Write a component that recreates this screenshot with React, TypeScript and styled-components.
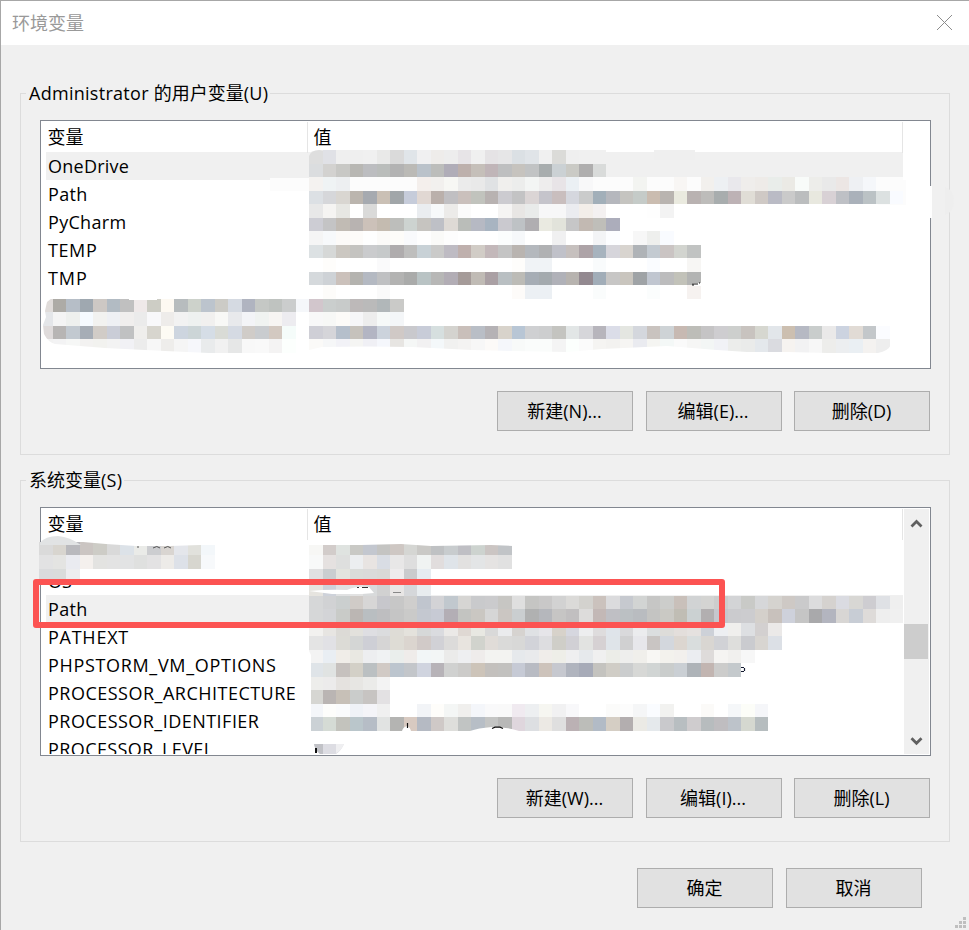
import React from "react";
import styled, { createGlobalStyle } from "styled-components";

const GlobalStyle = createGlobalStyle`
  * { box-sizing: border-box; }
  body { margin: 0; background: #f0f0f0; overflow: hidden; }
`;

const Dialog = styled.main`
  position: relative;
  width: 969px;
  height: 930px;
  overflow: hidden;
  display: flex;
  flex-direction: column;
  background: #f0f0f0;
  border-top: 1px solid #a7a7a7;
  border-left: 1px solid #a7a7a7;
  color: #000;
  font-family: "Open Sans", "Noto Sans CJK SC", sans-serif;
  font-size: 18px;
  line-height: 28px;
`;

const TitleBar = styled.header`
  flex: none;
  height: 44px;
  display: flex;
  justify-content: space-between;
  align-items: center;
  padding: 0 16px 1px 11px;
  background: #fff;
  color: #999;
`;

const CloseIcon = styled.svg`
  width: 17px;
  height: 17px;
  stroke: #8c8c8c;
  stroke-width: 1;
  fill: none;
`;

const Group = styled.fieldset<{ $first?: boolean }>`
  flex: none;
  margin: ${(p) => (p.$first ? "34px" : "11px")} 19px 0;
  padding: 0 18px 23px 19px;
  height: 376px;
  border: 1px solid #dcdcdc;
  min-width: 0;
`;

const Legend = styled.legend`
  margin-left: -14px;
  padding: 0 2px 0 3px;
  height: 28px;
  white-space: nowrap;
`;

const List = styled.div`
  display: flex;
  margin-top: 13px;
  height: 249px;
  width: 891px;
  padding: 1px;
  border: 1px solid #828790;
  background: #fff;
  overflow: hidden;
`;

const Table = styled.div`
  width: 861px;
  height: 245px;
  overflow: hidden;
`;

const HeaderRow = styled.div`
  display: grid;
  grid-template-columns: 266px 595px;
  height: 30px;
  line-height: 31px;
`;

const HeaderCell = styled.div`
  padding-left: 5.5px;
  border-right: 1px solid #e5e5e5;
`;

const Row = styled.div<{ $selected?: boolean }>`
  height: 28px;
  margin-left: 4px;
  padding-left: 2px;
  white-space: nowrap;
  background: ${(p) => (p.$selected ? "#f0f0f0" : "transparent")};
`;

const Label = styled.span<{ $track?: number }>`
  letter-spacing: ${(p) => p.$track ?? 0}px;
`;

const Scrollbar = styled.div`
  width: 25px;
  margin-left: 1px;
  display: flex;
  flex-direction: column;
  align-items: center;
  background: #f0f0f0;
`;

const Arrow = styled.svg`
  width: 25px;
  height: 30px;
  fill: none;
  stroke: #606060;
  stroke-width: 2.8;
`;

const Thumb = styled.div`
  width: 24px;
  height: 35px;
  margin: 85px 1px 65px 0;
  background: #cdcdcd;
`;

const Actions = styled.div`
  display: flex;
  justify-content: flex-end;
  gap: 12.5px;
  margin: 22px 1px 0 0;
`;

const Footer = styled(Actions)`
  margin: 26px 47px 0 0;
  gap: 13px;
`;

const Button = styled.button`
  width: 136px;
  height: 40px;
  padding: 0 1px 1px 0;
  border: 1px solid #adadad;
  border-radius: 0;
  background: #e1e1e1;
  color: #000;
  font: inherit;
`;

const Redaction = styled.svg`
  position: absolute;
  left: -1px;
  top: -1px;
  width: 969px;
  height: 930px;
  pointer-events: none;
`;

const Highlight = styled.div`
  position: absolute;
  left: 32px;
  top: 578px;
  width: 692px;
  height: 49px;
  border: 6px solid #fc5352;
  border-radius: 3px;
`;

/* Each strip is one mosaic row: grid row, first column, cell colours. */
type Strip = [number, number, string];
const CELL = 13.5;
const strips: Strip[] = [
  [-1, 1, "e0e1e6 efefef efefef f0f0f0 e9e9e8 dadada e0e5e9 f0f0f1 eeecea ededed e7e4e7 f0f0f0 e5e3e5 e6e6e7 dbe0e4 e0e4e8 f0f0f0 dbdbd8 efefef f0f0f0 f0f0f0"],
  [0, 0, "dbdddf d3d2d0 c8c8c5 b8b7b3 bcbdc0 babdbb b3b3b3 bbbab6 bac2ca bcbdbb b0adb8 bdb0ac c5bfb9 c0b5b8 bebfc0 c6c3be c1c3c4 a8adae cbd1d4 cacac5 afaeae d9dbda"],
  [1, 0, "f4f2f0 eff3f4 edeff1 fcfcfc fcfcfc fcfcfc fcfcfc fcfcfc f4efec f2f0ee f7f7f4 ebebeb e9e9e9 e0e2e4 f0efed ecedec f3f5f4 eeeded e8e4e7 ebf0f4 f8f8f9 fcfcfc fcfcfc fcfcfc f3f4f1 fcfcfc fcfcfc f8f6f4 fcfcfc f2f0ed edf0f3 e9e8ec efedeb eeebe8 e9edea ebeae5 f8fbf9 ededea e9e9e9 ece6e4 eef0f3 f5f7fa fcfcfc fcfcfc"],
  [2, 0, "dce0e4 d6d7da d9d6d1 bbb5ae a6aab0 cac0b5 a1a6a9 c6ccda e1d8d3 bab0ab c0bfc2 cac0bc c1c3bd b8b2b1 cccbd0 c3c3c4 dbd5d5 c5c4cb c9bebe d5d7de cacbcb a2afb9 b5b7bd c5c4c0 c5cbc8 cabcb0 b9b4b0 eaeadf b9b2b1 bdbcba a8adae bdb2b5 e0ddd6 cfc9c5 babbc5 cacaca bbbdbe e8e8df d8d1d5 bec0c5 aab1ba bbc2c5 dce1e1 f9fbff"],
  [3, 0, "e8e8e8 f5f4f2 e7e7e3 - dadad9 - - - eaedf0 f7f9fa ecebe9 fbfbfb - - f5f4f3 e8e6e4 e9ebea f7f7f8 f7f7f8 ebecf0 f3eee9 f4f1f1 - - - fefefe f3f3f3"],
  [4, 0, "cdcdd4 c4c4c5 c1bbb4 b8b3b1 ccc1b9 c4bbb0 bdbebb cdd3d0 c6c4c0 bec0c6 dedad5 babdb9 b6b9c3 a8b4c1 cac9cf bec2c5 b0aeb1 eaeae1 e2e3db c6c6c7 c2b9b2 bfbeb9 acadbb"],
  [5, 0, "f5f5f5 f7f9fb fcfaf8 fdfbf9 fefefe fbfaf8 fdfcf9 f9fafc fefefe fafaf8 fdfdfd - - - fbfdfd f6f8fa - - f0f0f1 - - f3f4f6 fcfdff - f7f7f7 eeefed f9fbff"],
  [6, 0, "dce1e3 d6d8d7 cbc7c1 c4c3c0 cacbcd c6c9ca afacad bebebd c8d1d6 cacac9 bebbc3 bfb0ad d1ccc6 c3b8ba c4c4c4 b9b4b0 b4b8bd b0b1b3 c0c1c9 c6c0be ada3a7 a7b3be d6d5db d8d4cf afb3b7 c3cad1 cac4c3 d2d4cf c1c3c2"],
  [7, 1, "fefdfb - - - fafafb - - - - - - - - - fefdfb f0f3f6 f0f3f6 - - - f9fbfc - - - fafcff - - f7f6f4"],
  [8, 0, "d5d9dc ced2d6 cbc1bb b4b3af b4b9c2 bfc0c2 b3b3b2 aaabaa b9c3c4 b7b7b6 b2adb5 a59b99 c0bbb5 aaa0a4 b9bfc2 bcbbb6 a6adb5 a4aaae b0b1b8 b7b3af 938990 a1adb8 c7c6c5 c9c5be 9fa3a6 c0c6d0 bcbcbd c2c2b9 b3b4b3"],
  [9, 1, "fdfcfa - - - fafafa - - - - - - - - - fdfbf9 ecf0f4 ecf0f4 - - - fafcfc - - - fbfdfd - - f6f2f0"],
  [10, -20, "e0dcda adaba6 b6bec7 9fa8b0 cdc8c4 b2bbc3 c0c0c0 efe9e9 cdcdc5 fdf9f2 b7bcbe cdd2cb bcc4cd cccbc6 d5dae2 b0b4c0 c5c8c5 bfc3c0 cbcdcd f5f7fa d2c6cc cacecd c8cbca bdb9b9 bababa b1b7b9 cacac8"],
  [11, -20, "e4e6e9 f4f4f4 eef0ee f5faff f2f2f0 eef0f4 f0eeed ebebeb f8f8fa eeecea f2f2f2 eef1f0 f1f0ef f8f8f6 e8e9ec f3f4f7 f0f3f1 f7f5f3 edecf0 - f8f8f8 f7f8f6 fcfbf8 f6f6f8 ededed f6f9f8 f4f6f8"],
  [12, -20, "dfdbdb b7b5b4 c2c9d0 a6adb6 d1ccc7 cacdd7 c0c1c2 efeeec d7d5ce fdfbf4 cdd5df ccd5d7 d5dde6 d9dbd6 d5dae3 d0ccc8 c9cccf d3c9c1 f5fcfa - cfcfd6 d5d5d9 b5bfcb c6c2bc b3b5c3 ccd3dc d0c9c6 c9c9cd c8ccd8 d6dfdf d4d3cf c9bfba b9bec6 b5b2b5 d8d3cb b8c6d5 cfd0d2 cdcecf c4c4c0 e2e6e6 d6d6da b7b5bc dbdde8 e4e6e1 d4d7dd c9c3bf ced3d6 c7b9b2 bdbdb8 c5c4c5 cecdd0 cdcfcd c8c3bf d6d7d0 e2e6ea ccbfb0 b6b9c3 c9cdcc eae9e9 ccd3e0 e1dbd5 c3c7ca fbfcff"],
  [13, -20, "f2f2f2 f3f3f4 f6f7f6 f3f2f1 f2f2ef f3f3f3 f1f1f5 ececec f7f7f7 eeedeb f5f5f5 f6f7fb e9ebec f1f1f1 e6e7e7 f8f8f8 f9f9f9 f4f3f3 fcfffd - fbfaf8 f6f7f8 f2f2f7 f5f5f3 f0f0f5 f5f7fc e7e5e2 f5f7f6 f2f1f2 f4f8fa f1f1f0 f4f3f2 f7f7f7 fcfaf8 f5f7fb f8faf9 fafcfb fafcfb f4f4f4 fcfffd fbfbfb f5f4f2 f3f2f0 f6f5f3 eaebf0 f5f5f2 f4f8f7 fafafa f6f6f5 f3f6f5 f1f2f6 ecedeb eaebea e4e8ec dadbe0 f6f3f0 f2f2f3 f7f7f7 ededeb eceef0 eaeff3 f4f2f0 eeeeee"],

  [28, -20, "dadada d8d5cf b9b9bd cbc5c2 cdccc6 d9d9d9 dce2e8 eaebe8 cccdd0 d9d5d1 e4e6eb e1e1dc f3f7fa"],
  [29, -20, "e2e2e3 e4e4e2 eaebf0 f4f0ed e3e3e1 e3e3e3 e2e3e4 dfe0df e3e2e3 edebe8 dde1e8 d7d6cf f7f9fb"],
  [30, -20, "dadbdd dadcdb ededef"],
  [28, 0, "f7f7f5 d2ccca dfe3e0 c9c9c5 c3c7cf c4c4c2 cec7c3 d5d6d3 cac9c6 bfc1c3 c8ccce bfbfc4 cdd3cf cbc5c3 c1c4c7"],
  [29, 0, "f8f9f9 e5e1e0 dedfde eceef0 e8e4e2 d9dde4 e8e7e7 dedede f0f3f2 e1dddd dfe4e9 e2e1e0 e3e5e6 e5e3e2 e1e1e1"],
  [30, 0, "e0e0e1 caced0 e3e4de dadcda dadada d9d9d7 eeeced cacbcd e6ecf1"],
  [31, 0, "e6e4df ced2da e0e1e2 e2e2e2 d8dadb d1d1d1 e8e6e5 d5d7da e8ecef"],
  [32, 0, "d6d7d8 d1d2d4 cbcfcf d0cbc7 d7d6d6 c7c7cc c7c7c7 cfcecd c0c5ce d3d3d6 c1c8ce d6d5d3 c9cacc cbcbcd c7c6c3 dfdfdf c5c5c3 c9c8c8 d2d2d2 dbdad8 d3d2ce cbc2bd dbdbdd c6c9cf d2d4d3 c6c6c5 cccdcb c9c0ba d1d3d4 d4d4d2 cdcdcd d3d4d6 c9cac7 d6d7d9 d5d3cf cec9c5 cacacb dcdcdd d5d2cf dadbe1 d8d7d4 cecdd1 dfe1e5 efefef"],
  [33, 0, "d6d7d8 d3d4d7 c9cbc8 bbb6b3 b9bec1 bebec0 c5c5c5 cacac9 c4c8d0 c7cad4 b3aeb5 c3c4c1 cac7c2 d6d6d6 cbc6c2 caced0 b0b1b1 b5b7bc c6c5c4 c1bfc0 dddcdb c3b8b6 bfbfc4 bbc0c3 b9bcc0 c4c4c2 cac9c4 c0bdb4 cbd1d2 b2afb0 c6c7cd cbcbce cccccf d4d0cb c8c1bc ced1db c5c5c5 a9a9ab b3b5bf d8d6d4 c8cdd5 dedbd9 eeeeee"],
  [34, 0, "f2f1ef e7e5e2 dcdad6 e2e1dc dedee2 dbdcde dedcd6 e4e2dc d6d8d8 dadbdf ebe9e7 dfd8d3 e8e8e2 d9d9d9 eaebed d6d3d0 dfe1e4 e6e5e9 d7d2ca d6d7df edeeef dedcdd dfe4ea d9d9db ebecee dbdedf dddcd9 e3dedb e5e1df cdd1d8 edeff2 f0efed dddfe2 d3d0d0 ebe9e8"],
  [35, 0, "e4e4e4 e1e1e5 dcdbd6 d4d6d5 cecfd6 d6d5d5 dedcd5 dbd5cf d1cac8 d1d1d6 dcdbda e8e4df d1d3cd e0dcd8 dadad9 d8d8d7 d2d3d9 dddde0 cfcec8 d1d0d5 e2e3e1 d6d1d3 dfe4e9 d0d0d1 e7e7eb c9c5c3 d3d7dd dcd6d0 d9dddd d9d6d2 d1d2d6 dededc cacbcf d8d5d1 dce0e6"],
  [36, 0, "f3f3f3 e9eef3 f0ede8 e9e8e2 edeef0 f0f2f3 eaeeec efecea f2f6f7 f3f6f6 ebebea eeeff1 efeceb f3f3f1 f3f3f1 e6e9ec e9eaec f0edea eeeee8 efeff0 e6e9ec f0f0f0 ecede8 eeeeed f0efeb f8f7f4 f3f2ed f2f0ed ebedf1 dedbda f5f4f2 f1f0ee f7f7f7"],
  [37, 0, "dfe4e8 e0e3e2 c6c1be d3d0c7 bbc0c2 d1cac5 bcc5ce c3c6ca d0d4df b7b3b8 d0d1d0 cccbc9 cdc4b9 c3c0bd c2c1bf c6cad5 b8bbc3 cdc3bb c6c8cf b0b4be a7abb8 c4c3bf d0cdc6 cbcdce d7d8d6 d1d5d4 cacdcc cacfd4 aeb3b8 c2b5b1 cccccb c4c9cc"],
  [38, 0, "ededeb ecebeb e5e2df e7e6e3 ebebe9 f3f3f3"],
  [39, 0, "d6d6d2 bab5b3 c7c0b7 cacccb c7c4c2 e3e1e3"],
  [40, 0, "f4f6f9 fdfdfb fafbfc eff2f7 f4f4f8 f0f0f0 - - f2f4f7 fefdfa f4f6f5 f0efed f4f6fa f9f9fa f9f9f9 f0eaf0 edeff1 f6f6f1 f1f1f2 f8f8fa - - fbfbfa fcfcfc f5f6f7 fafcff f2f2f0 - - fbfaf8 - f5f7f9 fcfdf8 f5f6f9"],
  [41, 0, "cbd1d5 d5dbd5 c3c3bd bac6cb b6bdc6 e1e3e2 b4b4b2 d8cac1 b5bac3 cfc9c7 dededb c1c4c3 b7bec6 c4c5c4 b8b8b7 dfd6dd dddfe2 ece9e4 dfdfdf bbb1b4 bcbdb9 b2bbc6 d5cec4 b3aeaf ebeae5 e5e9ec c9c9cc b8bec1 cfccce b7bcbe bfbdc0 bdc3ca d5d8d0 b6bdbf"],
];

const px = (c: number) => Math.round(309 + c * CELL);
const py = (r: number) => Math.floor(164 + r * CELL);

function Mosaic() {
  return (
    <Redaction viewBox="0 0 969 930" aria-hidden="true">
      <path d="M323 0h18v1h-18zM370 0h2v1h-2zM382 0h3v1h-3z" fill="#555" />
      <path d="M270 178h39v13h-39zM862 179l29 1h15v25h-28z" fill="#fcfcfc" />
      <path d="M309 164v-8q2-6 10-6q11 0 14 9v5z" fill="#dedede" />
      <path d="M654 150h41v10h-41z" fill="#efefef" />
      <g shapeRendering="crispEdges">
        {strips.map(([r, c0, cells]) =>
          cells.split(" ").map((fill, i) =>
            fill === "-" ? null : (
              <rect key={`${r}.${c0 + i}`} x={px(c0 + i)} y={py(r)} width={px(c0 + i + 1) - px(c0 + i)} height={py(r + 1) - py(r)} fill={`#${fill}`} />
            )
          )
        )}
        <path d="M930 186h2v32h-2z" fill="#fefefe" />
      </g>
      <path d="M945 187q9 3 9 14t-9 14z" fill="#eee" />
      {/* soft brush edges */}
      <path d="M41 298h11l-5 4-2 9 1 6-3 8 1 9q4 8 11 10l50 4 60 3 44 2v3H41z" fill="#fff" />
      <path d="M39 299h1v54h-1z" fill="#f0f0f0" />
      <path d="M40 299h1v54h-1z" fill="#828790" />
      <path d="M309 350l13-3q45-1 90 0l60 3 40 1 55 1 35-3 65-3 50 4 30 2h40l83 2H309z" fill="#fff" />
      <path d="M891 340v13h-13q10-2 13-8z" fill="#fff" />
      <path d="M129 299h28v1h-28z" fill="#fff" />
      <path d="M41 541h174v4h-15l-30 1-34 0-30-2-23-2z" fill="#fff" />
      <path d="M40 543q5-7 18-7 12 1 23 9H40z" fill="#e1e3e4" />
      <path d="M137 547h2M153 548q4-3 7 0M164 548q4-3 7 0" stroke="#555" fill="none" />
      <path d="M309 541h204v5l-22-1-60 1-30-2-40 1h-52z" fill="#fff" />
      <path d="M309 591q20-2 38-1 9-4 22-3l5 6-12 1h-30z" fill="#fff" />
      <path d="M357 587.5h2M362 587.5h6" stroke="#333" />
      <path d="M393 592.5h8" stroke="#888" />
      <path d="M307 623h2v28l2 4v80h-4z" fill="#fff" />
      <path d="M692 283h9v3h-9z" fill="#fff" />
      <path d="M692 284h6M693 284v2M699 283h1" stroke="#111" fill="none" />
      <path d="M741 667.5h3M741 671.5h3M744.5 668v3" stroke="#141a30" strokeWidth="1.2" fill="none" />
      <path d="M402 731q1-4 5-5 3 1 4 5zM470 731q8-3 22-4 16 0 27 4z" fill="#fff" />
      <path d="M407.5 723v5M492 728.5l3-1.3h5l3 1.3" stroke="#111" strokeWidth="1.2" fill="none" />
      <path d="M314 744h30q-3 7-8 10h-16q-5-4-6-10z" fill="#dddde3" />
      <path d="M314 744h9v10h-3q-5-4-6-10z" fill="#c1c2c7" />
      <path d="M336 744h8q-3 7-8 9z" fill="#efeff1" />
      <path d="M316 748v5" stroke="#111" strokeWidth="2" />
    </Redaction>
  );
}

interface Variable { name: string; track?: number; selected?: boolean; }

function VariableList({ items, scroll }: { items: Variable[]; scroll?: boolean }) {
  return (
    <List>
      <Table>
        <HeaderRow>
          <HeaderCell>变量</HeaderCell>
          <HeaderCell>值</HeaderCell>
        </HeaderRow>
        {items.map((v, i) => (
          <Row key={i} $selected={v.selected}><Label $track={v.track}>{v.name}</Label></Row>
        ))}
      </Table>
      {scroll && (
        <Scrollbar>
          <Arrow viewBox="0 0 25 30"><path d="M7.5 17.6L12.5 12.6L17.5 17.6" /></Arrow>
          <Thumb />
          <Arrow viewBox="0 0 25 30"><path d="M7.5 14.2L12.5 19.2L17.5 14.2" /></Arrow>
        </Scrollbar>
      )}
    </List>
  );
}

const userVariables: Variable[] = [
  { name: "OneDrive", selected: true, track: 0.25 },
  { name: "Path", track: 0.3 }, { name: "PyCharm", track: 0.3 },
  { name: "TEMP", track: 0.6 }, { name: "TMP", track: 0.9 },
];
const systemVariables: Variable[] = [
  { name: "" }, { name: "OS" }, { name: "Path", selected: true, track: 0.3 },
  { name: "PATHEXT", track: 0.75 }, { name: "PHPSTORM_VM_OPTIONS", track: 0.67 },
  { name: "PROCESSOR_ARCHITECTURE", track: 0.49 },
  { name: "PROCESSOR_IDENTIFIER", track: 0.47 }, { name: "PROCESSOR_LEVEL", track: 0.4 },
];

export default function App() {
  return (
    <>
      <GlobalStyle />
      <Dialog>
        <TitleBar>
          环境变量
          <CloseIcon viewBox="0 0 17 17"><path d="M1 1L16 16M16 1L1 16" /></CloseIcon>
        </TitleBar>
        <Group $first>
          <Legend><Label $track={0.28}>Administrator </Label>的用户变量<Label $track={0.3}>(U)</Label></Legend>
          <VariableList items={userVariables} />
          <Actions>
            <Button>新建(N)...</Button><Button>编辑(E)...</Button><Button>删除(D)</Button>
          </Actions>
        </Group>
        <Group>
          <Legend>系统变量<Label $track={0.3}>(S)</Label></Legend>
          <VariableList items={systemVariables} scroll />
          <Actions>
            <Button>新建(W)...</Button><Button>编辑(I)...</Button><Button>删除(L)</Button>
          </Actions>
        </Group>
        <Footer><Button>确定</Button><Button>取消</Button></Footer>
        <Mosaic />
        <Redaction viewBox="0 0 969 930" aria-hidden="true">
          <path d="M963 917h3v3h-3zM959 921h3v3h-3zM963 921h3v3h-3zM955 925h3v3h-3zM959 925h3v3h-3zM963 925h3v3h-3z" fill="#bfbfbf" />
        </Redaction>
        <Highlight />
      </Dialog>
    </>
  );
}
